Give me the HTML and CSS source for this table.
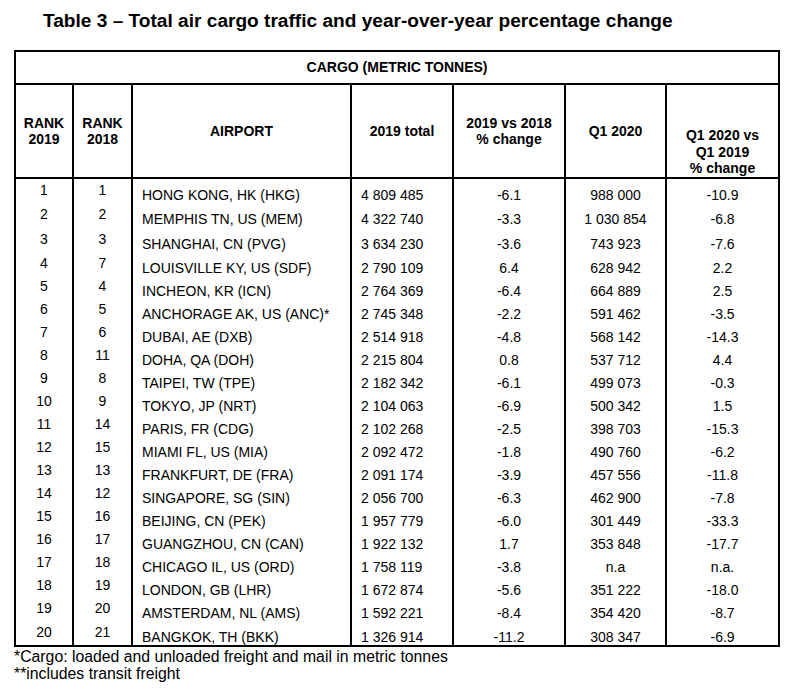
FILE: index.html
```html
<!DOCTYPE html>
<html lang="en">
<head>
<meta charset="utf-8">
<title>Table 3 – Total air cargo traffic</title>
<link rel="stylesheet" href="styles.css">
</head>
<body>
<div class="page">
  <h1 class="title">Table 3 – Total air cargo traffic and year-over-year percentage change</h1>
  <table class="cargo">
    <colgroup>
      <col class="c-rank1"><col class="c-rank2"><col class="c-air"><col class="c-tot"><col class="c-chg"><col class="c-q1"><col class="c-q1chg">
    </colgroup>
    <thead>
      <tr class="group"><th colspan="7">CARGO (METRIC TONNES)</th></tr>
      <tr class="heads">
        <th>RANK<br>2019</th>
        <th>RANK<br>2018</th>
        <th>AIRPORT</th>
        <th>2019 total</th>
        <th>2019 vs 2018<br>% change</th>
        <th>Q1 2020</th>
        <th class="th-bottom">Q1 2020 vs<br>Q1 2019<br>% change</th>
      </tr>
    </thead>
    <tbody>
      <tr class="r-first"><td class="rank">1</td><td class="rank">1</td><td class="name">HONG KONG, HK (HKG)</td><td class="total">4 809 485</td><td>-6.1</td><td>988 000</td><td>-10.9</td></tr>
      <tr class="r-tall"><td class="rank">2</td><td class="rank">2</td><td class="name">MEMPHIS TN, US (MEM)</td><td class="total">4 322 740</td><td>-3.3</td><td>1 030 854</td><td>-6.8</td></tr>
      <tr class="r-tall"><td class="rank">3</td><td class="rank">3</td><td class="name">SHANGHAI, CN (PVG)</td><td class="total">3 634 230</td><td>-3.6</td><td>743 923</td><td>-7.6</td></tr>
      <tr><td class="rank">4</td><td class="rank">7</td><td class="name">LOUISVILLE KY, US (SDF)</td><td class="total">2 790 109</td><td>6.4</td><td>628 942</td><td>2.2</td></tr>
      <tr><td class="rank">5</td><td class="rank">4</td><td class="name">INCHEON, KR (ICN)</td><td class="total">2 764 369</td><td>-6.4</td><td>664 889</td><td>2.5</td></tr>
      <tr><td class="rank">6</td><td class="rank">5</td><td class="name">ANCHORAGE AK, US (ANC)*</td><td class="total">2 745 348</td><td>-2.2</td><td>591 462</td><td>-3.5</td></tr>
      <tr><td class="rank">7</td><td class="rank">6</td><td class="name">DUBAI, AE (DXB)</td><td class="total">2 514 918</td><td>-4.8</td><td>568 142</td><td>-14.3</td></tr>
      <tr><td class="rank">8</td><td class="rank">11</td><td class="name">DOHA, QA (DOH)</td><td class="total">2 215 804</td><td>0.8</td><td>537 712</td><td>4.4</td></tr>
      <tr><td class="rank">9</td><td class="rank">8</td><td class="name">TAIPEI, TW (TPE)</td><td class="total">2 182 342</td><td>-6.1</td><td>499 073</td><td>-0.3</td></tr>
      <tr><td class="rank">10</td><td class="rank">9</td><td class="name">TOKYO, JP (NRT)</td><td class="total">2 104 063</td><td>-6.9</td><td>500 342</td><td>1.5</td></tr>
      <tr><td class="rank">11</td><td class="rank">14</td><td class="name">PARIS, FR (CDG)</td><td class="total">2 102 268</td><td>-2.5</td><td>398 703</td><td>-15.3</td></tr>
      <tr><td class="rank">12</td><td class="rank">15</td><td class="name">MIAMI FL, US (MIA)</td><td class="total">2 092 472</td><td>-1.8</td><td>490 760</td><td>-6.2</td></tr>
      <tr><td class="rank">13</td><td class="rank">13</td><td class="name">FRANKFURT, DE (FRA)</td><td class="total">2 091 174</td><td>-3.9</td><td>457 556</td><td>-11.8</td></tr>
      <tr><td class="rank">14</td><td class="rank">12</td><td class="name">SINGAPORE, SG (SIN)</td><td class="total">2 056 700</td><td>-6.3</td><td>462 900</td><td>-7.8</td></tr>
      <tr><td class="rank">15</td><td class="rank">16</td><td class="name">BEIJING, CN (PEK)</td><td class="total">1 957 779</td><td>-6.0</td><td>301 449</td><td>-33.3</td></tr>
      <tr><td class="rank">16</td><td class="rank">17</td><td class="name">GUANGZHOU, CN (CAN)</td><td class="total">1 922 132</td><td>1.7</td><td>353 848</td><td>-17.7</td></tr>
      <tr><td class="rank">17</td><td class="rank">18</td><td class="name">CHICAGO IL, US (ORD)</td><td class="total">1 758 119</td><td>-3.8</td><td>n.a</td><td>n.a.</td></tr>
      <tr><td class="rank">18</td><td class="rank">19</td><td class="name">LONDON, GB (LHR)</td><td class="total">1 672 874</td><td>-5.6</td><td>351 222</td><td>-18.0</td></tr>
      <tr><td class="rank">19</td><td class="rank">20</td><td class="name">AMSTERDAM, NL (AMS)</td><td class="total">1 592 221</td><td>-8.4</td><td>354 420</td><td>-8.7</td></tr>
      <tr class="r-last"><td class="rank">20</td><td class="rank">21</td><td class="name">BANGKOK, TH (BKK)</td><td class="total">1 326 914</td><td>-11.2</td><td>308 347</td><td>-6.9</td></tr>
    </tbody>
  </table>
  <p class="note">*Cargo: loaded and unloaded freight and mail in metric tonnes<br>**includes transit freight</p>
</div>
</body>
</html>
```

FILE: styles.css
```css
html, body {
  margin: 0;
  padding: 0;
  background: #ffffff;
  color: #000000;
  font-family: "Liberation Sans", Arial, sans-serif;
}

.page {
  padding: 10px 0 0 14px;
}

.title {
  margin: 0 0 18px 29px;
  font-size: 19.1px;
  line-height: 22px;
  font-weight: bold;
}

.cargo {
  border-collapse: collapse;
  table-layout: fixed;
  width: 766px;
  border: 2px solid #000;
  font-size: 14px;
}

.c-rank1 { width: 58px; }
.c-rank2 { width: 59px; }
.c-air { width: 219px; }
.c-tot { width: 102px; }
.c-chg { width: 112px; }
.c-q1 { width: 101px; }
.c-q1chg { width: 113px; }

.cargo th,
.cargo td {
  box-sizing: border-box;
  padding: 0;
}

.cargo th {
  border: 2px solid #000;
  font-weight: bold;
  text-align: center;
  vertical-align: middle;
  line-height: 16.5px;
}

.group th {
  height: 33px;
}

.heads th {
  height: 93.5px;
  padding-top: 1px;
}

.heads .th-bottom {
  vertical-align: bottom;
  padding-top: 0;
}

.cargo td {
  border-left: 2px solid #000;
  border-right: 2px solid #000;
  border-top: 0;
  border-bottom: 0;
  text-align: center;
  vertical-align: middle;
  line-height: 16px;
  height: 23px;
  white-space: nowrap;
}

.cargo .r-first td {
  height: 29px;
  padding-top: 4px;
}

.cargo .r-tall td {
  height: 25px;
}

.cargo .r-last td {
  height: 19.5px;
  padding-top: 4px;
}

.cargo td.rank {
  line-height: 6px;
  padding-bottom: 10px;
}

.cargo td.name {
  text-align: left;
  padding-left: 9px;
}

.cargo td.total {
  text-align: left;
  padding-left: 9px;
}

.note {
  margin: 1px 0 0 0;
  font-size: 15.8px;
  line-height: 17px;
}
```
